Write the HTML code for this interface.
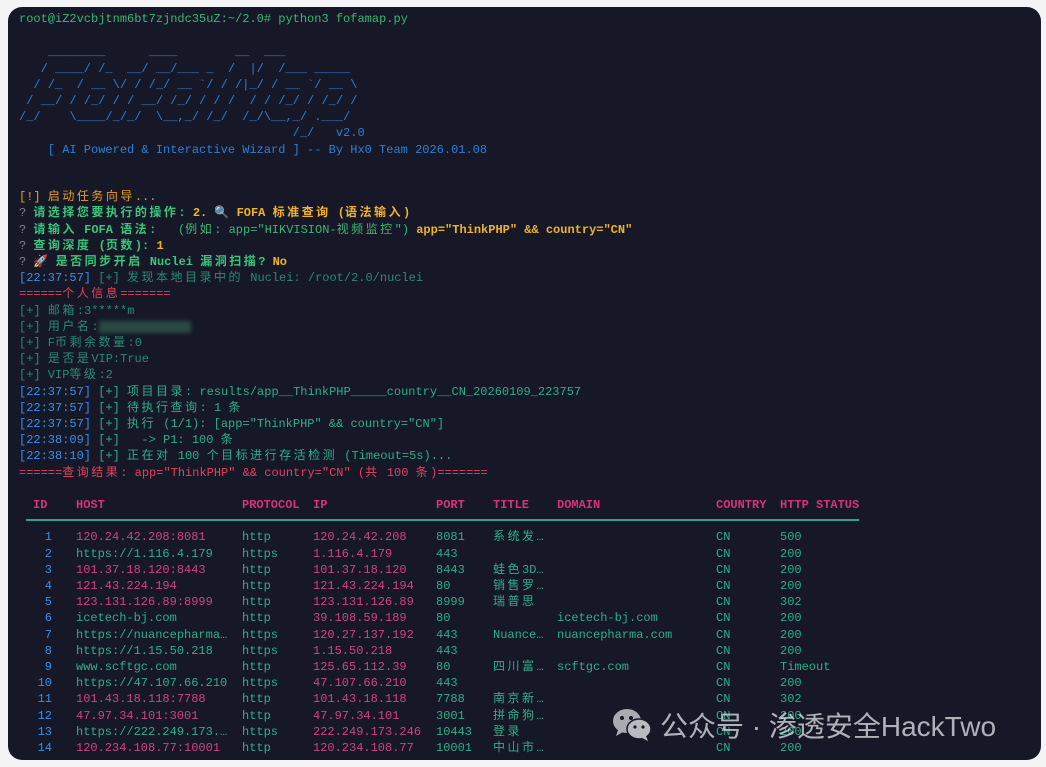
<!DOCTYPE html>
<html><head><meta charset="utf-8"><style>
html,body{margin:0;padding:0;background:#f4f4f5;width:1046px;height:767px;overflow:hidden}
#t{position:absolute;left:8px;top:7px;width:1033px;height:753px;background:#161828;border-radius:14px;overflow:hidden}
#w{position:absolute;left:0;top:1px;width:1033px;height:753px}
.l{position:absolute;left:11px;white-space:pre;font:12px/16.2px "Liberation Mono","Noto Sans CJK SC",monospace;height:16.2px}
.g{color:#3cb671}.b{color:#2f7fd6}.y{color:#f0b22c;font-weight:bold}.o{color:#e59d2e}.q{color:#7b8090}
.gb{color:#3cc47a;font-weight:bold}.r{color:#e6405a}.tl{color:#2fae86}.dt{color:#2a8a70}.ts{color:#3a8ee8}
.p{color:#d0447f}.h{color:#d6337a;font-weight:bold}.n{color:#3a8ee8}
.c{position:absolute}
.k{letter-spacing:2.5px}
</style></head><body>
<div id="t"><div id="w">
<div class="l g" style="top:3px">root@iZ2vcbjtnm6bt7zjndc35uZ:~/2.0# python3 fofamap.py</div>
<div class="l b" style="top:36.4px">    ________      ____        __  ___</div>
<div class="l b" style="top:52.6px">   / ____/ /_  __/ __/___ _  /  |/  /___ _____</div>
<div class="l b" style="top:68.8px">  / /_  / __ \/ / /_/ __ `/ / /|_/ / __ `/ __ \</div>
<div class="l b" style="top:85px"> / __/ / /_/ / / __/ /_/ / / /  / / /_/ / /_/ /</div>
<div class="l b" style="top:101.2px">/_/    \____/_/_/  \__,_/ /_/  /_/\__,_/ .___/</div>
<div class="l b" style="top:117.4px">                                      /_/   v2.0</div>
<div class="l b" style="top:133.6px">    [ AI Powered &amp; Interactive Wizard ] -- By Hx0 Team 2026.01.08</div>
<div class="l o" style="top:181.2px">[!] 启动任务向导...</div>
<div class="l" style="top:197.4px"><span class="q">? </span><span class="gb">请选择您要执行的操作: </span><span class="y">2. 🔍 FOFA 标准查询 (语法输入)</span></div>
<div class="l" style="top:213.6px"><span class="q">? </span><span class="gb">请输入 FOFA 语法: </span><span class="g">  (例如: app="HIKVISION-视频监控") </span><span class="y">app="ThinkPHP" &amp;&amp; country="CN"</span></div>
<div class="l" style="top:229.8px"><span class="q">? </span><span class="gb">查询深度 (页数): </span><span class="y">1</span></div>
<div class="l" style="top:246px"><span class="q">? </span><span class="gb">🚀 是否同步开启 Nuclei 漏洞扫描? </span><span class="y">No</span></div>
<div class="l" style="top:262.2px"><span class="ts">[22:37:57]</span><span class="dt"> [+] 发现本地目录中的 Nuclei: /root/2.0/nuclei</span></div>
<div class="l r" style="top:278.4px">======个人信息=======</div>
<div class="l dt" style="top:294.6px">[+] 邮箱:3*****m</div>
<div class="l dt" style="top:310.8px">[+] 用户名:<span style="display:inline-block;width:92px;height:12px;background:#2a4a44;filter:blur(2px);vertical-align:middle"></span></div>
<div class="l dt" style="top:327px">[+] F币剩余数量:0</div>
<div class="l dt" style="top:343.2px">[+] 是否是VIP:True</div>
<div class="l dt" style="top:359.4px">[+] VIP等级:2</div>
<div class="l" style="top:375.6px"><span class="ts">[22:37:57]</span><span class="tl"> [+] 项目目录: results/app__ThinkPHP_____country__CN_20260109_223757</span></div>
<div class="l" style="top:391.8px"><span class="ts">[22:37:57]</span><span class="tl"> [+] 待执行查询: 1 条</span></div>
<div class="l" style="top:408px"><span class="ts">[22:37:57]</span><span class="tl"> [+] 执行 (1/1): [app="ThinkPHP" &amp;&amp; country="CN"]</span></div>
<div class="l" style="top:424.2px"><span class="ts">[22:38:09]</span><span class="tl"> [+]   -&gt; P1: 100 条</span></div>
<div class="l" style="top:440.4px"><span class="ts">[22:38:10]</span><span class="tl"> [+] 正在对 100 个目标进行存活检测 (Timeout=5s)...</span></div>
<div class="l r" style="top:456.6px">======查询结果: app="ThinkPHP" &amp;&amp; country="CN" (共 100 条)=======</div>

<div class="l h" style="top:489px;width:1000px"><span class="c" style="left:14px">ID</span><span class="c" style="left:57px">HOST</span><span class="c" style="left:223px">PROTOCOL</span><span class="c" style="left:294px">IP</span><span class="c" style="left:417px">PORT</span><span class="c" style="left:474px">TITLE</span><span class="c" style="left:538px">DOMAIN</span><span class="c" style="left:697px">COUNTRY</span><span class="c" style="left:761px">HTTP STATUS</span></div>
<div style="position:absolute;left:18px;top:511px;width:833px;height:2px;background:#2aa387"></div>
<div id="rows"></div>
</div>
<div style="position:absolute;left:604px;top:698px;display:flex;align-items:center;opacity:.8">
<svg width="40" height="34" viewBox="0 0 40 34"><ellipse cx="15" cy="13" rx="14" ry="12" fill="#cfcfd4"/><path d="M6 22 L4 28 L11 24Z" fill="#cfcfd4"/><ellipse cx="27" cy="21" rx="12" ry="10" fill="#e2e2e6" stroke="#161828" stroke-width="1.5"/><path d="M34 28 L36 33 L30 30Z" fill="#e2e2e6"/><circle cx="10" cy="10" r="2" fill="#161828"/><circle cx="19" cy="10" r="2" fill="#161828"/><circle cx="23" cy="19" r="1.6" fill="#161828"/><circle cx="31" cy="19" r="1.6" fill="#161828"/></svg>
<span style="font:28px 'Liberation Sans','Noto Sans CJK SC',sans-serif;color:#d8d8dc;margin-left:8px">公众号 · 渗透安全HackTwo</span>
</div>
</div>
<script>
var d=[["1","120.24.42.208:8081","http","120.24.42.208","8081","系统发…","","500",1],
["2","https://1.116.4.179","https","1.116.4.179","443","","","200",0],
["3","101.37.18.120:8443","http","101.37.18.120","8443","蛙色3D…","","200",1],
["4","121.43.224.194","http","121.43.224.194","80","销售罗…","","200",1],
["5","123.131.126.89:8999","http","123.131.126.89","8999","瑞普思","","302",1],
["6","icetech-bj.com","http","39.108.59.189","80","","icetech-bj.com","200",0],
["7","https://nuancepharma…","https","120.27.137.192","443","Nuance…","nuancepharma.com","200",0],
["8","https://1.15.50.218","https","1.15.50.218","443","","","200",0],
["9","www.scftgc.com","http","125.65.112.39","80","四川富…","scftgc.com","Timeout",0],
["10","https://47.107.66.210","https","47.107.66.210","443","","","200",0],
["11","101.43.18.118:7788","http","101.43.18.118","7788","南京新…","","302",1],
["12","47.97.34.101:3001","http","47.97.34.101","3001","拼命狗…","","200",1],
["13","https://222.249.173.…","https","222.249.173.246","10443","登录","","200",0],
["14","120.234.108.77:10001","http","120.234.108.77","10001","中山市…","","200",1]];
var h="";d.forEach(function(r,i){var t=521.4+i*16.2;
h+='<div class="l" style="top:'+t+'px;width:1000px"><span class="c n" style="left:0;width:33px;text-align:right">'+r[0]+'</span><span class="c '+(r[8]?'p':'tl')+'" style="left:57px">'+r[1]+'</span><span class="c tl" style="left:223px">'+r[2]+'</span><span class="c p" style="left:294px">'+r[3]+'</span><span class="c tl" style="left:417px">'+r[4]+'</span><span class="c tl" style="left:474px">'+r[5]+'</span><span class="c tl" style="left:538px">'+r[6]+'</span><span class="c tl" style="left:697px">CN</span><span class="c tl" style="left:761px">'+r[7]+'</span></div>';});
document.getElementById("rows").outerHTML=h;
var tw=document.createTreeWalker(document.getElementById("w"),NodeFilter.SHOW_TEXT),ns=[],n;
while(n=tw.nextNode())ns.push(n);
ns.forEach(function(t){if(!/[\u3000-\u9fff\uff00-\uffef]/.test(t.nodeValue))return;
var s=document.createElement("span");
s.innerHTML=t.nodeValue.replace(/&/g,"&amp;").replace(/</g,"&lt;").replace(/>/g,"&gt;").replace(/([\u3000-\u9fff\uff00-\uffef]+)/g,'<span class="k">$1</span>');
t.parentNode.replaceChild(s,t);});
</script>
</body></html>
